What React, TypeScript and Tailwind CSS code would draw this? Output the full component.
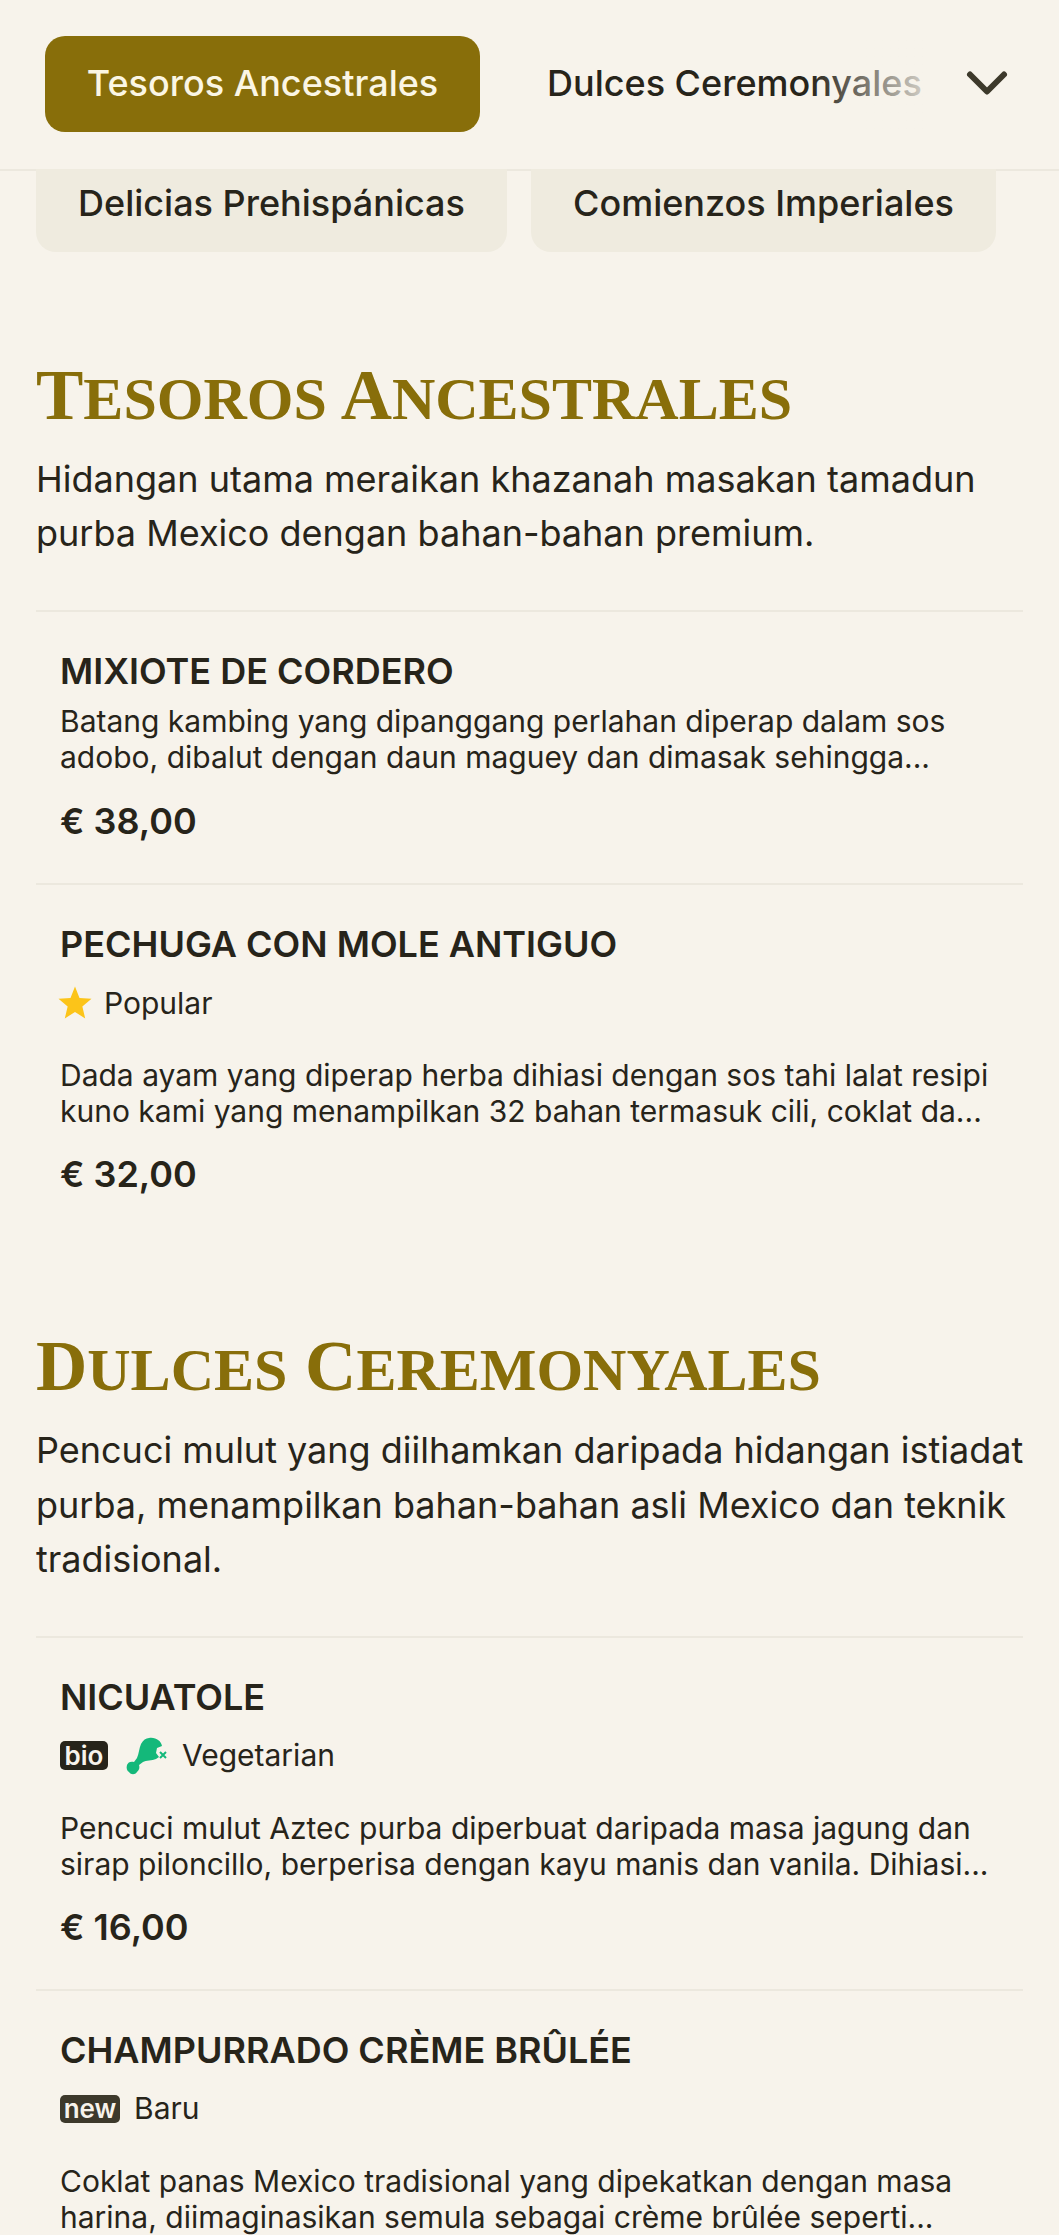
import { ChevronDown } from 'lucide-react'
import { ReactNode } from 'react'

function SectionTitle({ words }: { words: string[] }) {
  return (
    <h2 className="font-['Liberation_Serif',serif] font-bold text-[#886e0a] text-[71px] leading-[80px] whitespace-nowrap">
      {words.map((w, i) => (
        <span key={w}>
          {i > 0 ? ' ' : ''}
          {w[0]}
          <span className="text-[60px] uppercase">{w.slice(1)}</span>
        </span>
      ))}
    </h2>
  )
}

function Item({ name, tags, lines, price, last }: { name: string; tags?: ReactNode; lines: string[]; price?: string; last?: boolean }) {
  return (
    <div className={`border-t-2 border-[#ece8de] px-6 pt-[37px] ${last ? '' : 'pb-[40px]'}`}>
      <h3 className="text-[36px] leading-[44px] font-semibold text-[#27241a]">{name}</h3>
      {tags && <div className="mt-[15px] flex h-[44px] items-center text-[30px] text-[#27241a]">{tags}</div>}
      <p className={`text-[30px] leading-[36px] text-[#27241a] ${tags ? 'mt-[32px]' : 'mt-[10px]'}`}>
        {lines.map(l => <span key={l} className="block whitespace-nowrap">{l}</span>)}
      </p>
      {price && <div className={`${tags ? 'mt-[23px]' : 'mt-[24px]'} text-[36px] leading-[44px] font-semibold text-[#27241a]`}>{price}</div>}
    </div>
  )
}

export default function App() {
  return (
    <div className="h-[2235px] w-[1059px] overflow-hidden bg-[#f7f3eb] font-['Inter',sans-serif] text-[#27241a]">
      <header className="flex h-[171px] items-start border-b-2 border-[#ece8de] pl-[45px]">
        <div className="mt-[36px] flex h-[96px] w-[435px] items-center justify-center rounded-[20px] bg-[#886e0a] pb-[2px] text-[36px] font-medium text-[#fbf6e4]">
          Tesoros Ancestrales
        </div>
        <div className="relative ml-[67px] mt-[36px] flex h-[96px] w-[382px] items-center pb-[2px] text-[36px] font-medium whitespace-nowrap">
          Dulces Ceremonyales
          <div className="absolute inset-y-0 right-0 w-[120px] bg-gradient-to-r from-transparent to-[#f7f3eb]/85" />
        </div>
        <ChevronDown className="ml-[24px] mt-[49px] size-[68px] text-[#3d392b]" strokeWidth={2.1} />
      </header>

      <div className="flex gap-[24px] pl-[36px] -mt-[2px]">
        <div className="flex h-[83px] w-[471px] items-center justify-center rounded-b-[20px] bg-[#efebdf] pb-[16px] text-[36px] font-medium">Delicias Prehispánicas</div>
        <div className="flex h-[83px] w-[465px] items-center justify-center rounded-b-[20px] bg-[#efebdf] pb-[16px] text-[36px] font-medium">Comienzos Imperiales</div>
      </div>

      <main className="px-[36px]">
        <section className="pt-[103px]">
          <SectionTitle words={['Tesoros', 'Ancestrales']} />
          <p className="mt-[13px] text-[36px] leading-[54px] text-[#27241a]">
            Hidangan utama meraikan khazanah masakan tamadun purba Mexico dengan bahan-bahan premium.
          </p>
          <div className="mt-[50px]">
            <Item
              name="MIXIOTE DE CORDERO"
              lines={['Batang kambing yang dipanggang perlahan diperap dalam sos', 'adobo, dibalut dengan daun maguey dan dimasak sehingga...']}
              price="€ 38,00"
            />
            <Item
              name="PECHUGA CON MOLE ANTIGUO"
              tags={
                <>
                  <svg viewBox="0 0 24 24" className="size-[36px] fill-[#fcc419] -ml-[3px] mr-[11px]"><path d="M12 1l3 7.6 8 .6-6.1 5.2 1.9 7.9-6.8-4.3-6.8 4.3 1.9-7.9L1 9.2l8-.6z" /></svg>
                  Popular
                </>
              }
              lines={['Dada ayam yang diperap herba dihiasi dengan sos tahi lalat resipi', 'kuno kami yang menampilkan 32 bahan termasuk cili, coklat da...']}
              price="€ 32,00"
            />
          </div>
        </section>

        <section className="pt-[90px]">
          <SectionTitle words={['Dulces', 'Ceremonyales']} />
          <p className="mt-[13px] text-[36px] leading-[54.5px] text-[#27241a] whitespace-nowrap">
            <span className="block">Pencuci mulut yang diilhamkan daripada hidangan istiadat</span>
            <span className="block">purba, menampilkan bahan-bahan asli Mexico dan teknik</span>
            <span className="block">tradisional.</span>
          </p>
          <div className="mt-[49px]">
            <Item
              name="NICUATOLE"
              tags={
                <>
                  <span className="flex h-[29px] w-[48px] items-center justify-center rounded-[5px] bg-[#27241a] text-[26px] font-semibold text-[#f7f3eb]">bio</span>
                  <svg viewBox="0 0 42 38" className="ml-[18px] mr-[14px] h-[38px] w-[42px]">
                    <path fill="#14b87a" d="M23 1C30 0 35 4 36 9L31 11 30 16 33 20 30 22C26 24 20 23 17 25L13 28C14 31 13 33 11 35 9 38 5 38 3 35 1 34 0 31 1 28 2 25 5 24 8 25L11 21C13 16 13 12 15 7 17 3 20 1 23 1Z" />
                    <path stroke="#14b87a" strokeWidth="2" fill="none" d="M34 15l6 6M40 15l-6 6" />
                  </svg>
                  Vegetarian
                </>
              }
              lines={['Pencuci mulut Aztec purba diperbuat daripada masa jagung dan', 'sirap piloncillo, berperisa dengan kayu manis dan vanila. Dihiasi...']}
              price="€ 16,00"
            />
            <Item
              name="CHAMPURRADO CRÈME BRÛLÉE"
              tags={
                <>
                  <span className="flex h-[28px] w-[60px] items-center justify-center rounded-[5px] bg-[#3d392b] text-[26px] font-semibold text-[#f7f3eb]">new</span>
                  <span className="ml-[14px]">Baru</span>
                </>
              }
              lines={['Coklat panas Mexico tradisional yang dipekatkan dengan masa', 'harina, diimaginasikan semula sebagai crème brûlée seperti...']}
              last
            />
          </div>
        </section>
      </main>
    </div>
  )
}
